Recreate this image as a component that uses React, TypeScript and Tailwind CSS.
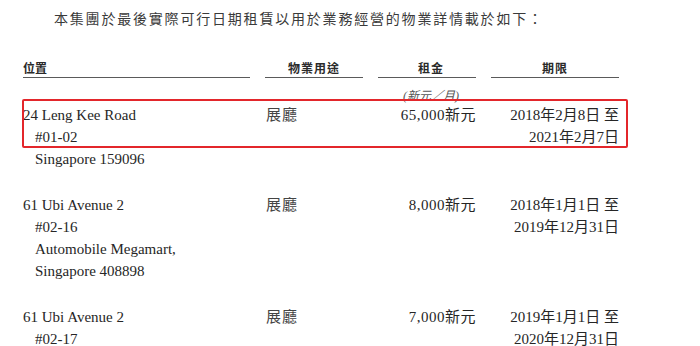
const serif = "font-['Liberation_Serif','Noto_Sans_CJK_TC',serif]";

type Lease = {
  address: string[];
  use: string;
  rent: string;
  period: string[];
};

// the third lease continues below the fold; only its first two lines are visible
const leases: Lease[] = [
  {
    address: ["24 Leng Kee Road", "#01-02", "Singapore 159096"],
    use: "展廳",
    rent: "65,000新元",
    period: ["2018年2月8日 至", "2021年2月7日"],
  },
  {
    address: ["61 Ubi Avenue 2", "#02-16", "Automobile Megamart,", "Singapore 408898"],
    use: "展廳",
    rent: "8,000新元",
    period: ["2018年1月1日 至", "2019年12月31日"],
  },
  {
    address: ["61 Ubi Avenue 2", "#02-17"],
    use: "展廳",
    rent: "7,000新元",
    period: ["2019年1月1日 至", "2020年12月31日"],
  },
];

const cols = "grid grid-cols-[227px_98px_98px_128px] gap-x-[15px]";

const App = () => {
  return (
    <div className={`relative w-[700px] h-[346px] overflow-hidden bg-white text-[#262626] ${serif}`}>
      <p className="pl-[54px] pt-[10px] text-[14px] leading-[20px] tracking-[1.8px] text-[#3a3a3a]">
        本集團於最後實際可行日期租賃以用於業務經營的物業詳情載於如下：
      </p>

      <div className="ml-[23px] w-[596px] mt-[32px]">
        {/* header */}
        <div className={`${cols} text-[12px] leading-[14px] font-bold text-[#2a2a2a]`}>
          <div className="border-b border-[#5a5a5a] pb-[1px]">位置</div>
          <div className="border-b border-[#5a5a5a] pb-[1px] text-center tracking-[1px]">物業用途</div>
          <div className="border-b border-[#5a5a5a] pb-[1px] text-center tracking-[1px] pl-[8px]">租金</div>
          <div className="border-b border-[#5a5a5a] pb-[1px] text-center tracking-[1px]">期限</div>
        </div>
        <div className={`${cols} mt-[11px] text-[12px] leading-[14px] italic text-[#555]`}>
          <div />
          <div />
          <div className="text-center pl-[8px]">(新元／月)</div>
          <div />
        </div>

        {/* rows */}
        <div className="mt-[1px] flex flex-col gap-[24px] text-[15px] leading-[22px]">
          {leases.map((l, i) => (
            <div key={i} className={cols}>
              <div>
                {l.address.map((line, j) => (
                  <div key={j} className={j > 0 ? "pl-[12px]" : ""}>
                    {line}
                  </div>
                ))}
              </div>
              <div className="pl-[1px] tracking-[1px] text-[#444]">{l.use}</div>
              <div className="text-right tracking-[0.5px]">{l.rent}</div>
              <div className="text-right">
                {l.period.map((p, j) => (
                  <div key={j}>{p}</div>
                ))}
              </div>
            </div>
          ))}
        </div>
      </div>

      {/* highlight */}
      <div className="absolute left-[22px] top-[99px] w-[606px] h-[49px] border-2 border-[#e3262b] rounded-[2px]" />
    </div>
  );
};

export default App;
